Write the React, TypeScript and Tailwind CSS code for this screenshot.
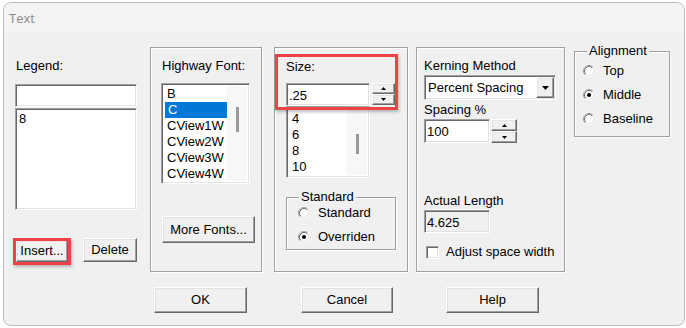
import type { ReactNode } from "react";

/* Classic Win32 "Text" dialog: legend list, highway font, size, kerning, alignment. */

const sunken =
  "border border-t-[#a0a0a0] border-l-[#a0a0a0] border-r-white border-b-white shadow-[inset_1px_1px_0_#696969,inset_-1px_-1px_0_#e3e3e3]";
const raised =
  "border border-t-white border-l-white border-r-[#696969] border-b-[#696969] shadow-[inset_-1px_-1px_0_#a0a0a0,inset_1px_1px_0_#e3e3e3] bg-[#f0f0f0]";
const etched = "border border-[#a0a0a0] shadow-[inset_1px_1px_0_#fff,1px_1px_0_#fff]";

function Button({ label, className = "" }: { label: string; className?: string }) {
  return <div className={`${raised} flex items-center justify-center ${className}`}>{label}</div>;
}

function Arrow({ dir, w = 5 }: { dir: "up" | "down"; w?: number }) {
  const h = Math.ceil(w / 2);
  const d = dir === "up" ? `M0 ${h}L${w / 2} 0L${w} ${h}Z` : `M0 0L${w} 0L${w / 2} ${h}Z`;
  return (
    <svg width={w} height={h} viewBox={`0 0 ${w} ${h}`}>
      <path d={d} fill="#000" />
    </svg>
  );
}

function Spinner({ className = "" }: { className?: string }) {
  return (
    <div className={`flex flex-col ${className}`}>
      <div className={`${raised} flex flex-1 items-center justify-center`}>
        <Arrow dir="up" />
      </div>
      <div className={`${raised} flex flex-1 items-center justify-center`}>
        <Arrow dir="down" />
      </div>
    </div>
  );
}

function Radio({ checked, label }: { checked?: boolean; label: string }) {
  return (
    <div className="flex h-6 items-center gap-2">
      <svg width="12" height="12" viewBox="0 0 12 12" className="shrink-0">
        <circle cx="6" cy="6" r="5.5" fill="#fff" />
        <path d="M2.11 9.89A5.5 5.5 0 0 1 9.89 2.11" stroke="#a0a0a0" fill="none" />
        <path d="M2.82 9.18A4.5 4.5 0 0 1 9.18 2.82" stroke="#696969" fill="none" />
        <path d="M9.18 2.82A4.5 4.5 0 0 1 2.82 9.18" stroke="#e3e3e3" fill="none" />
        {checked && <circle cx="6" cy="6" r="2" fill="#000" />}
      </svg>
      <span>{label}</span>
    </div>
  );
}

function Group({ title, className = "", children }: { title: string; className?: string; children: ReactNode }) {
  return (
    <fieldset className={`${etched} ${className}`}>
      <legend className="ml-[12px] bg-[#f0f0f0] px-[2px] leading-4">{title}</legend>
      {children}
    </fieldset>
  );
}

function ListBox({
  items,
  selected,
  thumbTop,
  thumbH,
  className = "",
  itemsClass = "",
}: {
  items: string[];
  selected?: number;
  thumbTop: number;
  thumbH: number;
  className?: string;
  itemsClass?: string;
}) {
  return (
    <div className={`${sunken} flex overflow-hidden bg-white p-[2px] ${className}`}>
      <div className={`flex-1 overflow-hidden ${itemsClass}`}>
        {items.map((it, i) => (
          <div
            key={it}
            className={`h-4 pl-[3px] leading-4 ${i === selected ? "ml-[1px] bg-[#0078d7] text-white" : ""}`}
          >
            {it}
          </div>
        ))}
      </div>
      <div className="relative w-[20px] bg-[#f7f7f7]">
        <div className="absolute left-[9px] w-[3px] bg-[#9a9a9a]" style={{ top: thumbTop, height: thumbH }} />
      </div>
    </div>
  );
}

export default function App() {
  return (
    <div className="h-[328px] w-[686px] bg-white pl-[3px] pt-[2px] font-['Liberation_Sans',Arial,sans-serif] text-[13px] leading-4 text-black">
      <div className="flex h-[324px] w-[682px] flex-col overflow-hidden rounded-[8px] border border-[#bdbdbd] bg-[#f0f0f0]">
        <div className="flex h-[30px] shrink-0 items-center bg-[#f4f4f4] pl-[5px] font-['Open_Sans',sans-serif] text-[13px] text-[#8a8a8a]">
          Text
        </div>

        <div className="pl-[11px] pt-[10px]">
          <div className="flex items-start">
            {/* Legend */}
            <div className="mt-[15px] flex w-[122px] flex-col">
              <div className="h-4 pl-[1px]">Legend:</div>
              <div className={`${sunken} mt-[10px] h-[23px] bg-white`} />
              <div className={`${sunken} mt-[1px] h-[102px] bg-white px-[3px] pt-[2px]`}>8</div>
              <div className="mt-[28px] flex items-start">
                <div className="relative ml-[1px] mt-[2px]">
                  <Button label="Insert..." className="h-[22px] w-[52px]" />
                  <div className="absolute -left-[3px] -top-[2px] h-[27px] w-[58px] border-[3px] border-[#ef4146] shadow-[1px_2px_3px_rgba(0,0,0,0.25)]" />
                </div>
                <Button label="Delete" className="ml-[15px] h-[24px] w-[54px]" />
              </div>
            </div>

            {/* Highway font */}
            <div className={`${etched} ml-[13px] mt-[4px] flex h-[225px] w-[112px] flex-col pl-[10px] pt-[10px]`}>
              <div className="ml-[1px] h-4">Highway Font:</div>
              <ListBox
                items={["B", "C", "CView1W", "CView2W", "CView3W", "CView4W"]}
                selected={1}
                thumbTop={21}
                thumbH={25}
                className="mt-[9px] h-[101px] w-[89px]"
              />
              <Button label="More Fonts..." className="ml-[1px] mt-[32px] h-[27px] w-[93px]" />
            </div>

            {/* Size */}
            <div className={`${etched} relative ml-[12px] mt-[4px] flex h-[225px] w-[134px] flex-col pl-[11px] pt-[11px]`}>
              <div className="h-4">Size:</div>
              <div className="mt-[8px] flex items-start">
                <div className={`${sunken} h-[23px] w-[84px] bg-white pl-[2px] pt-[4px]`}>.25</div>
                <Spinner className="ml-[2px] h-[22px] w-[23px]" />
              </div>
              <ListBox
                items={["4", "6", "8", "10"]}
                thumbTop={25}
                thumbH={20}
                className="h-[72px] w-[84px]"
                itemsClass="pt-[2px]"
              />
              <Group title="Standard" className="mt-[11px] h-[61px] w-[110px]">
                <div className="-mt-[4px] pl-[11px]">
                  <Radio label="Standard" />
                  <Radio label="Overriden" checked />
                </div>
              </Group>
              <div className="absolute left-0 top-[6px] h-[56px] w-[123px] border-[3px] border-[#ef4146] shadow-[1px_2px_3px_rgba(0,0,0,0.25)]" />
            </div>

            {/* Kerning */}
            <div className={`${etched} ml-[8px] mt-[4px] flex h-[225px] w-[149px] flex-col pl-[7px] pt-[10px]`}>
              <div className="h-4">Kerning Method</div>
              <div className={`${sunken} mt-[1px] flex h-[25px] w-[132px] items-center bg-white pl-[3px] pr-[1px]`}>
                <span className="flex-1">Percent Spacing</span>
                <div className={`${raised} flex h-[21px] w-[18px] items-center justify-center`}>
                  <Arrow dir="down" w={7} />
                </div>
              </div>
              <div className="mt-[2px] h-4">Spacing %</div>
              <div className="mt-[1px] flex items-start">
                <div className={`${sunken} h-[24px] w-[66px] bg-white pl-[2px] pt-[4px]`}>100</div>
                <Spinner className="ml-[1px] h-[24px] w-[26px]" />
              </div>
              <div className="mt-[50px] h-4">Actual Length</div>
              <div className={`${sunken} mt-[1px] h-[23px] w-[66px] bg-[#f0f0f0] pl-[2px] pt-[4px]`}>4.625</div>
              <div className="mt-[11px] flex items-center">
                <div className={`${sunken} ml-[2px] h-[13px] w-[13px] bg-white`} />
                <span className="ml-[7px]">Adjust space width</span>
              </div>
            </div>

            {/* Alignment */}
            <Group title="Alignment" className="ml-[9px] h-[94px] w-[96px]">
              <div className="pl-[8px]">
                <Radio label="Top" />
                <Radio label="Middle" checked />
                <Radio label="Baseline" />
              </div>
            </Group>
          </div>

          <div className="mt-[15px] flex">
            <Button label="OK" className="ml-[139px] h-[26px] w-[93px]" />
            <Button label="Cancel" className="ml-[54px] h-[26px] w-[92px]" />
            <Button label="Help" className="ml-[53px] h-[26px] w-[93px]" />
          </div>
        </div>
      </div>
    </div>
  );
}
